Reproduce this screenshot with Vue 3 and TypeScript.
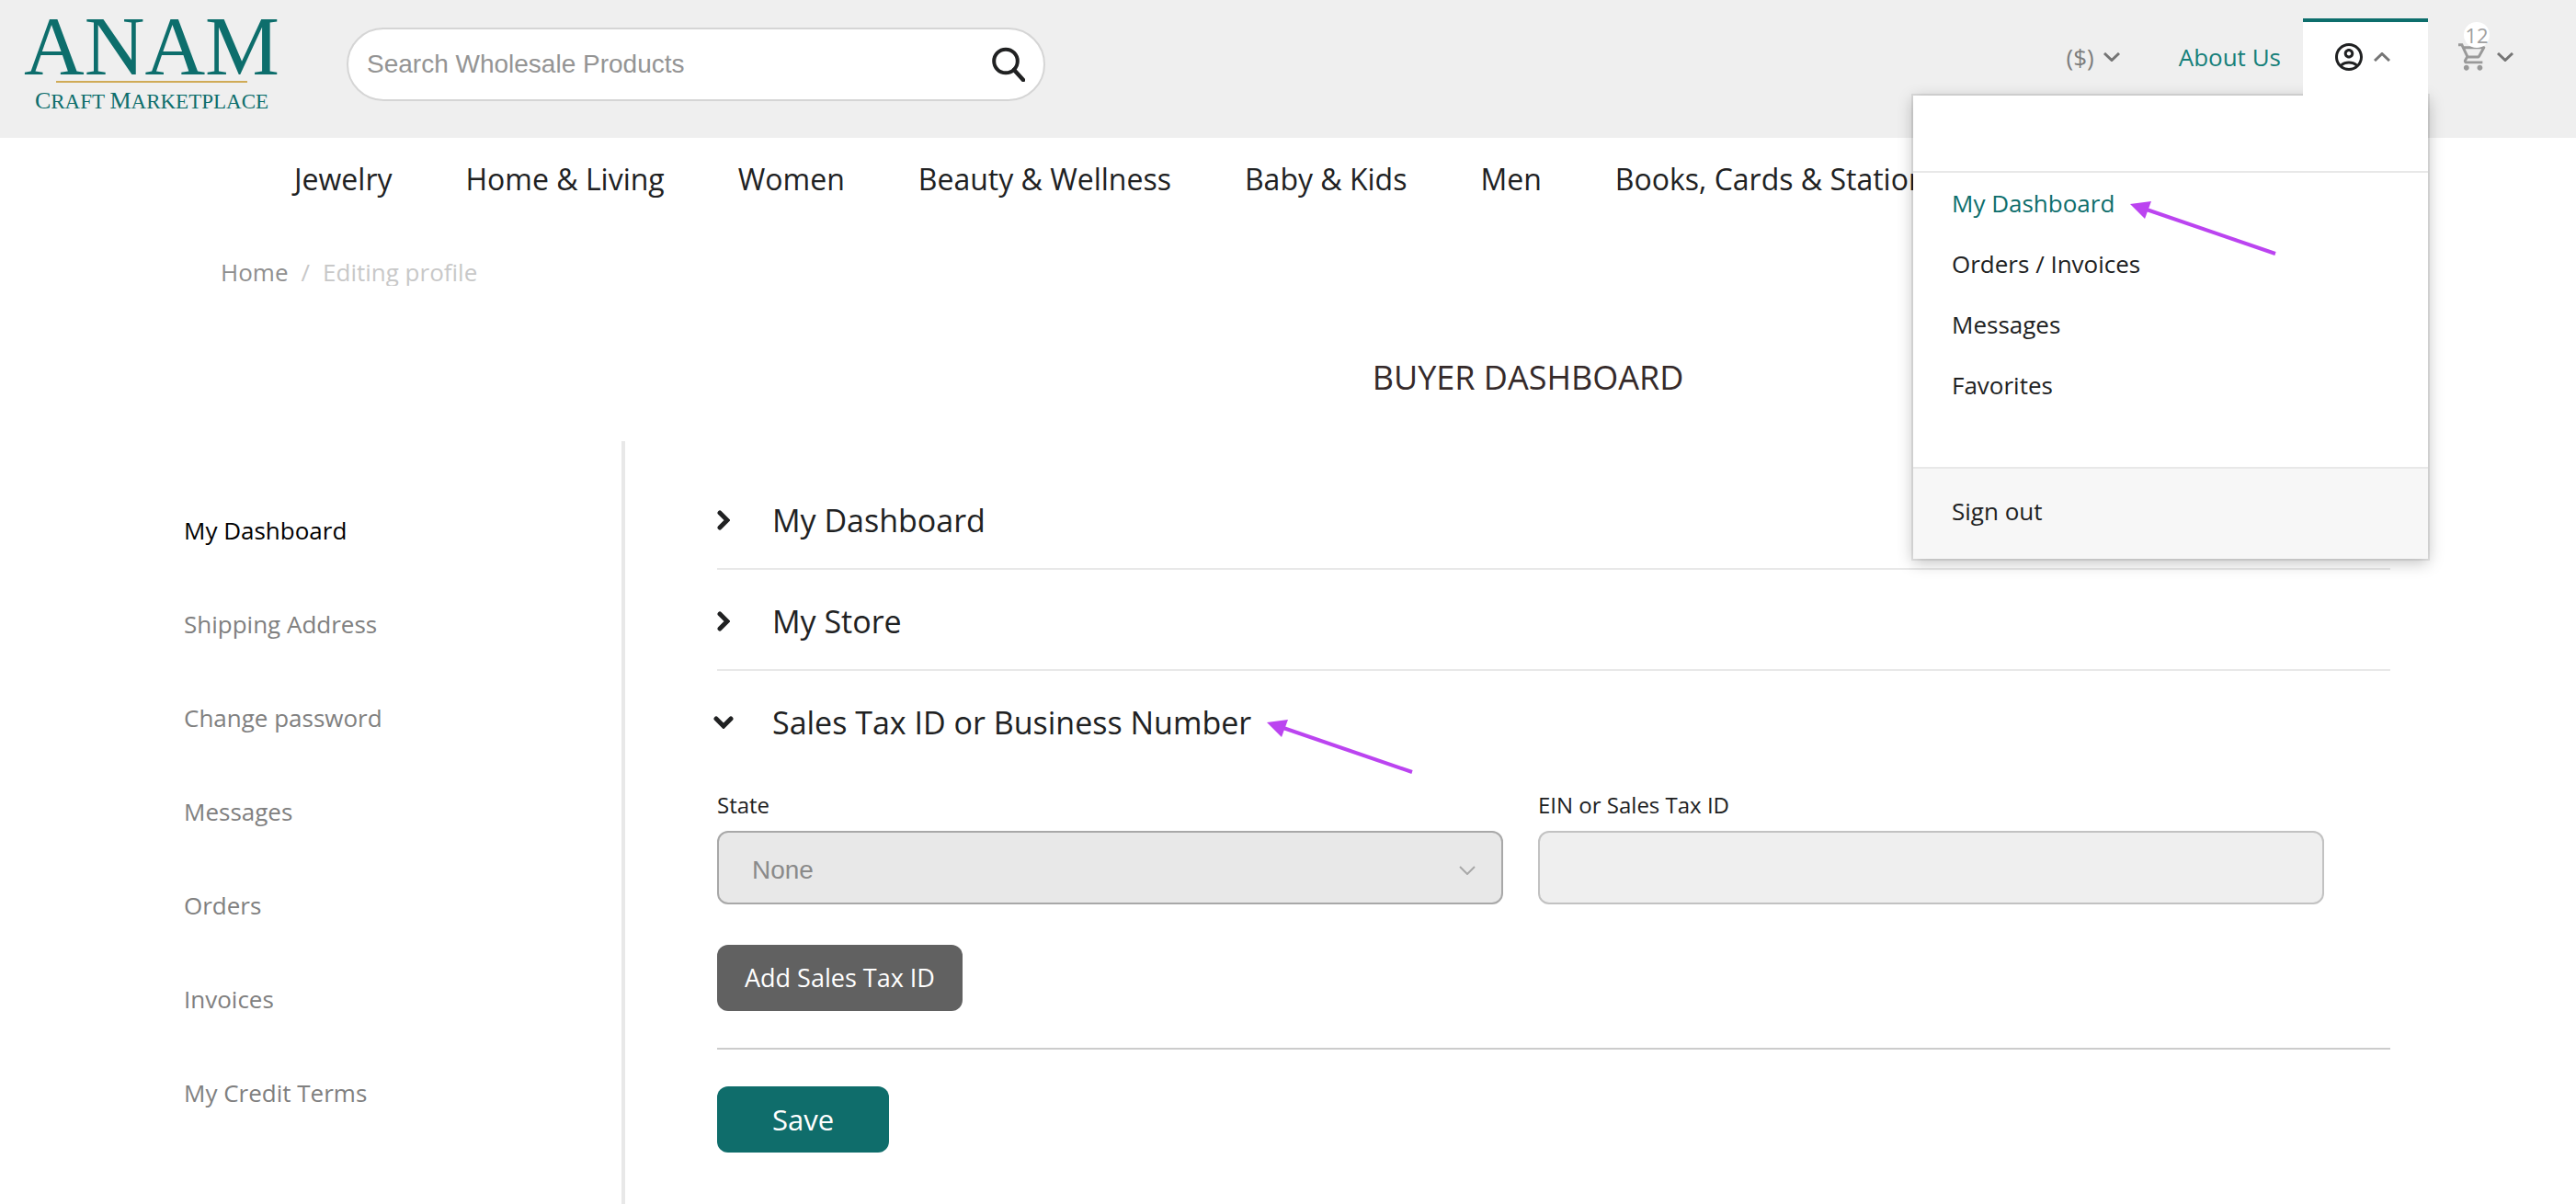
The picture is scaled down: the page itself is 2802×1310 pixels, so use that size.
<script setup lang="ts">
import { ref } from 'vue'

interface Section {
  title: string
  open: boolean
}

const categories: string[] = [
  'Jewelry',
  'Home & Living',
  'Women',
  'Beauty & Wellness',
  'Baby & Kids',
  'Men',
  'Books, Cards & Stationery',
]

const accountLinks: string[] = ['My Dashboard', 'Orders / Invoices', 'Messages', 'Favorites']

const sideLinks: string[] = [
  'My Dashboard',
  'Shipping Address',
  'Change password',
  'Messages',
  'Orders',
  'Invoices',
  'My Credit Terms',
]

const sections: Section[] = [
  { title: 'My Dashboard', open: false },
  { title: 'My Store', open: false },
  { title: 'Sales Tax ID or Business Number', open: true },
]

const search = ref('')
const taxState = ref('None')
const taxId = ref('')
const cartCount = ref(12)
</script>

<template>
  <div class="page">
    <header class="top">
      <a class="logo" href="#" aria-label="Anam Craft Marketplace">
        <span class="logo-name">ANAM</span>
        <span class="logo-rule"></span>
        <span class="logo-tag"><b>C</b>RAFT <b>M</b>ARKETPLACE</span>
      </a>

      <form class="search" role="search" @submit.prevent>
        <input v-model="search" type="text" placeholder="Search Wholesale Products" aria-label="Search Wholesale Products" />
        <button type="submit" aria-label="Search">
          <svg width="36" height="38" viewBox="0 0 36 38" fill="none" stroke="#202122" stroke-width="4">
            <circle cx="15" cy="15.500" r="12.800" />
            <path d="M24 25 L34 36" stroke-width="4.500" stroke-linecap="round" />
          </svg>
        </button>
      </form>

      <nav class="tools" aria-label="Account">
        <button class="tool currency" type="button">
          <span>($)</span>
          <svg class="caret" viewBox="0 0 18 10"><path d="M1 1 L9 8.500 L17 1" /></svg>
        </button>
        <a class="tool about" href="#">About Us</a>
        <div class="account">
          <button class="tool tab" type="button" aria-label="My account" aria-expanded="true">
            <svg width="30" height="30" viewBox="2 2 20 20" fill="#202122">
              <path d="M12 2C6.480 2 2 6.480 2 12s4.480 10 10 10 10-4.480 10-10S17.520 2 12 2zM7.350 18.500C8.660 17.560 10.260 17 12 17s3.340.560 4.650 1.500C15.340 19.440 13.740 20 12 20s-3.340-.560-4.650-1.500zm10.790-1.380C16.450 15.800 14.320 15 12 15s-4.450.800-6.140 2.120C4.700 15.730 4 13.950 4 12c0-4.420 3.580-8 8-8s8 3.580 8 8c0 1.950-.700 3.730-1.860 5.120z" />
              <path d="M12 6c-1.930 0-3.500 1.570-3.500 3.500S10.070 13 12 13s3.500-1.570 3.500-3.500S13.930 6 12 6zm0 5c-.830 0-1.500-.670-1.500-1.500S11.170 8 12 8s1.500.670 1.500 1.500S12.830 11 12 11z" />
            </svg>
            <svg class="caret" viewBox="0 0 18 10"><path d="M1 9 L9 1.500 L17 9" /></svg>
          </button>
          <div class="menu">
            <div class="menu-head"></div>
            <ul>
              <li v-for="(link, i) in accountLinks" :key="link">
                <a href="#" :class="{ current: i === 0 }">{{ link }}</a>
                <svg v-if="i === 0" class="pointer" viewBox="0 0 160 62">
                  <path d="M18 10 L158 58" />
                  <polygon points="0,4 23,1 16,20" />
                </svg>
              </li>
            </ul>
            <div class="menu-foot"><a href="#">Sign out</a></div>
          </div>
        </div>
        <button class="tool cart" type="button" aria-label="Cart">
          <span class="cart-icon">
            <svg width="30" height="30" viewBox="1 2 20.500 20" fill="#999">
              <path d="M15.550 13c.750 0 1.410-.410 1.750-1.030l3.580-6.490A.996.996 0 0 0 20.010 4H5.210l-.940-2H1v2h2l3.600 7.590-1.350 2.440C4.520 15.370 5.480 17 7 17h12v-2H7l1.100-2h7.450zM6.160 6h12.150l-2.760 5H8.530L6.160 6zM7 18c-1.100 0-1.990.900-1.990 2S5.900 22 7 22s2-.900 2-2-.900-2-2-2zm10 0c-1.100 0-1.990.900-1.990 2s.890 2 1.990 2 2-.900 2-2-.900-2-2-2z" />
            </svg>
            <span class="badge">{{ cartCount }}</span>
          </span>
          <svg class="caret" viewBox="0 0 18 10"><path d="M1 1 L9 8.500 L17 1" /></svg>
        </button>
      </nav>
    </header>

    <nav class="categories" aria-label="Categories">
      <a v-for="c in categories" :key="c" href="#">{{ c }}</a>
    </nav>

    <nav class="crumbs" aria-label="Breadcrumb">
      <a href="#">Home</a>
      <span>/</span>
      <span class="here">Editing profile</span>
    </nav>

    <h1>BUYER DASHBOARD</h1>

    <div class="body">
      <aside class="side">
        <a v-for="(link, i) in sideLinks" :key="link" href="#" :class="{ current: i === 0 }">{{ link }}</a>
      </aside>

      <main>
        <button v-for="s in sections" :key="s.title" class="section" :class="{ open: s.open }" type="button" :aria-expanded="s.open">
          <span class="marker">
            <svg v-if="s.open" width="22" height="14" viewBox="0 0 22 14"><path d="M3 3 L11 11 L19 3" /></svg>
            <svg v-else width="14" height="22" viewBox="0 0 14 22"><path d="M3 3 L11 11 L3 19" /></svg>
          </span>
          <span class="title">
            {{ s.title }}
            <svg v-if="s.open" class="pointer" viewBox="0 0 160 62">
              <path d="M18 10 L158 58" />
              <polygon points="0,4 23,1 16,20" />
            </svg>
          </span>
        </button>

        <form @submit.prevent>
          <div class="fields">
            <div class="field">
              <label for="tax-state">State</label>
              <div class="select">
                <select id="tax-state" v-model="taxState" disabled>
                  <option>None</option>
                </select>
                <svg width="18" height="10" viewBox="0 0 18 10"><path d="M1 1 L9 9 L17 1" /></svg>
              </div>
            </div>
            <div class="field">
              <label for="tax-id">EIN or Sales Tax ID</label>
              <input id="tax-id" v-model="taxId" type="text" disabled />
            </div>
          </div>
          <button class="add" type="button">Add Sales Tax ID</button>
          <hr />
          <button class="save" type="submit">Save</button>
        </form>
      </main>
    </div>
  </div>
</template>

<style>
body {
  margin: 0;
  background: #fff;
}
</style>

<style scoped>
.page,
.page * {
  box-sizing: border-box;
}

.page {
  display: flex;
  flex-direction: column;
  min-height: 100vh;
  overflow-x: hidden;
  color: #202122;
  font-family: "Open Sans", "Noto Sans", sans-serif;
  font-size: 26px;
  line-height: 36px;
}

a {
  color: inherit;
  text-decoration: none;
}

button {
  padding: 0;
  border: 0;
  background: none;
  color: inherit;
  font: inherit;
  cursor: pointer;
}

/* Header */
.top {
  display: flex;
  align-items: flex-start;
  height: 150px;
  padding: 0 68px 0 25px;
  background: #efefef;
}

.logo {
  display: flex;
  flex-direction: column;
  align-items: center;
  width: 280px;
  color: #0d6e6c;
  font-family: "Liberation Serif", serif;
  white-space: nowrap;
}

.logo-name {
  height: 88px;
  font-size: 91px;
  line-height: 102px;
}

.logo-rule {
  width: 208px;
  height: 2px;
  background: #d0ab57;
}

.logo-tag {
  margin-top: 4px;
  font-size: 23px;
  line-height: 32px;
}

.logo-tag b {
  font-size: 26px;
  font-weight: 400;
}

.search {
  display: flex;
  align-items: center;
  width: 760px;
  height: 80px;
  margin: 30px 0 0 72px;
  padding: 0 20px;
  border: 2px solid #d5d5d5;
  border-radius: 40px;
  background: #fff;
}

.search input {
  flex: 1;
  min-width: 0;
  padding: 0;
  border: 0;
  outline: 0;
  background: none;
  font-family: "Liberation Sans", Arial, sans-serif;
  font-size: 28px;
}

.search input::placeholder {
  color: #949494;
  opacity: 1;
}

.search button,
.search svg {
  display: block;
}

.tools {
  display: flex;
  margin: 20px 0 0 auto;
}

.tool {
  display: flex;
  align-items: center;
  height: 84px;
}

.caret {
  width: 18px;
  height: 10px;
  fill: none;
  stroke: #757575;
  stroke-width: 3;
}

.currency {
  gap: 10px;
  color: #7d7d7d;
}

.about {
  margin-left: 64px;
  color: #16807a;
}

.account {
  position: relative;
  z-index: 5;
  margin-left: 24px;
}

.tab {
  position: relative;
  z-index: 1;
  gap: 12px;
  width: 136px;
  padding: 0 0 4px 35px;
  border-top: 4px solid #0d6e6c;
  background: #fff;
}

.menu {
  position: absolute;
  top: 84px;
  right: 0;
  width: 560px;
  background: #fff;
  box-shadow: 0 0 0 2px rgba(0, 0, 0, 0.08), 0 4px 16px rgba(0, 0, 0, 0.25);
}

.menu-head {
  height: 84px;
  border-bottom: 2px solid #e8e8e8;
}

.menu ul {
  margin: 0;
  padding: 0 0 56px;
  list-style: none;
}

.menu li {
  display: flex;
  align-items: center;
  position: relative;
  height: 66px;
  padding-left: 42px;
}

.menu .current {
  color: #0d6e6c;
}

.menu-foot {
  padding: 28px 42px 34px;
  border-top: 2px solid #e8e8e8;
  background: #f7f7f7;
}

.pointer {
  position: absolute;
  width: 160px;
  height: 62px;
  fill: #bb44f0;
}

.pointer path {
  stroke: #bb44f0;
  stroke-width: 4;
}

.menu .pointer {
  top: 30px;
  left: 236px;
}

.cart {
  gap: 12px;
  margin-left: 33px;
}

.cart-icon {
  position: relative;
  height: 30px;
}

.cart-icon > svg {
  display: block;
}

.badge {
  position: absolute;
  bottom: 25px;
  left: 6px;
  width: 28px;
  height: 28px;
  border-radius: 50%;
  background: #fff;
  color: #a0a0a0;
  font-size: 22px;
  line-height: 28px;
  text-align: center;
}

/* Category bar */
.categories {
  display: flex;
  align-items: center;
  gap: 80px;
  height: 90px;
  padding-left: 320px;
  font-size: 32px;
  white-space: nowrap;
}

.crumbs {
  display: flex;
  gap: 14px;
  margin-top: 38px;
  padding-left: 240px;
  color: #c8c8c8;
}

.crumbs a {
  color: #8f8f8f;
}

/* The current page name is cut just below its baseline */
.here {
  height: 33px;
  overflow: hidden;
}

h1 {
  margin: 73px 200px 45px 722px;
  color: #352a2a;
  font-size: 36px;
  font-weight: 400;
  line-height: 48px;
  text-align: center;
}

/* Dashboard */
.body {
  display: flex;
  flex: 1;
  padding: 0 202px 0 200px;
}

.side {
  display: flex;
  flex-direction: column;
  flex: none;
  width: 480px;
  padding-top: 46px;
  border-right: 4px solid #e8e8e8;
  color: #808080;
}

.side a {
  line-height: 102px;
}

.side .current {
  color: #000;
}

main {
  flex: 1;
  min-width: 0;
  padding: 30px 0 56px 100px;
}

.section {
  display: flex;
  align-items: center;
  width: 100%;
  height: 110px;
  padding-top: 4px;
  border-bottom: 2px solid #e8e8e8;
  font-size: 34px;
  text-align: left;
}

.section.open {
  border-color: transparent;
}

.marker {
  display: flex;
  justify-content: center;
  width: 14px;
  margin-right: 46px;
}

.marker svg {
  flex: none;
  fill: none;
  stroke: #202122;
  stroke-width: 5;
  stroke-linecap: round;
}

.title {
  position: relative;
}

.title .pointer {
  top: 14px;
  left: 100%;
  margin-left: 17px;
}

.fields {
  display: grid;
  grid-template-columns: 1fr 1fr;
  gap: 38px;
  padding: 20px 72px 0 0;
}

.field label {
  display: block;
  margin-bottom: 12px;
  font-size: 24px;
  line-height: 32px;
}

.select {
  position: relative;
}

.field select,
.field input {
  display: block;
  width: 100%;
  height: 80px;
  padding: 4px 36px 0;
  border: 2px solid #c2c2c2;
  border-radius: 12px;
  background: #efefef;
  color: #8a8a8a;
  font-family: "Liberation Sans", Arial, sans-serif;
  font-size: 28px;
  opacity: 1;
}

.field select {
  border-color: #a8a8a8;
  background: #e8e8e8;
  appearance: none;
}

.select svg {
  position: absolute;
  top: 38px;
  right: 30px;
  fill: none;
  stroke: #a8a8a8;
  stroke-width: 2;
}

.add,
.save {
  display: block;
  height: 72px;
  border-radius: 12px;
  color: #fff;
}

.add {
  margin-top: 44px;
  padding: 0 30px;
  background: #616161;
  font-size: 27px;
}

hr {
  height: 2px;
  margin: 40px 0;
  border: 0;
  background: #ccc;
}

.save {
  padding: 0 60px;
  background: #0f6d6b;
  font-size: 31px;
}
</style>
